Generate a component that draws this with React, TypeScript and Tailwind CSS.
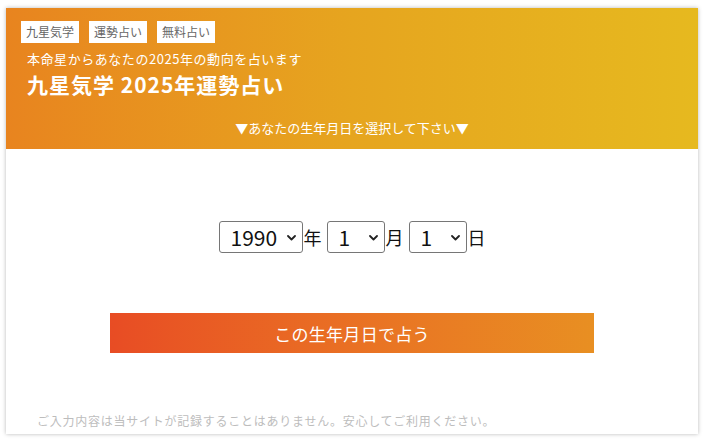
import React from "react";

const font = { fontFamily: '"Noto Sans CJK JP", "Noto Sans", sans-serif' };

function Sel({ value, w }: { value: string; w: string }) {
  return (
    <div className={`relative ${w} h-[32px] border border-[#767676] rounded-[3px] bg-white flex items-center`}>
      <span className="pl-[11px] text-[21px] leading-none text-[#111]">{value}</span>
      <svg className="absolute right-[6px] top-[13px]" width="9" height="6" viewBox="0 0 9 6">
        <path d="M1 1 L4.5 4.5 L8 1" stroke="#222" strokeWidth="1.8" fill="none" strokeLinecap="round" strokeLinejoin="round" />
      </svg>
    </div>
  );
}

export default function App() {
  return (
    <div className="w-[710px] h-[443px] bg-white pt-[8px] pl-[6px]" style={font}>
      <div className="w-[692px] h-[426px] bg-white shadow-[0_0_4px_rgba(0,0,0,0.28)] flex flex-col">
        <div className="h-[141px] bg-gradient-to-r from-[#e8841f] via-[#e6a51f] to-[#e6b91f] flex flex-col pl-[15px] pt-[13px]">
          <div className="flex gap-[10px]">
            {["九星気学", "運勢占い", "無料占い"].map((t) => (
              <span key={t} className="h-[22px] px-[5px] bg-white text-[#666] text-[12px] leading-[22px]">
                {t}
              </span>
            ))}
          </div>
          <div className="pl-[6px] mt-[7px] text-white text-[13px] leading-[18px] tracking-[0.55px]">本命星からあなたの2025年の動向を占います</div>
          <div className="pl-[6px] mt-[3px] text-white text-[21px] font-bold leading-[27px] tracking-[1px]">九星気学 2025年運勢占い</div>
          <div className="mt-[21px] -ml-[15px] text-center text-white text-[13px] leading-[18px]">▼あなたの生年月日を選択して下さい▼</div>
        </div>
        <div className="flex flex-col items-center">
          <div className="mt-[72px] flex items-center text-[18px] text-[#111] leading-none">
            <Sel value="1990" w="w-[84px]" />
            <span className="ml-[1px]">年</span>
            <span className="w-[5px]" />
            <Sel value="1" w="w-[58px]" />
            <span className="ml-[1px]">月</span>
            <span className="w-[5px]" />
            <Sel value="1" w="w-[58px]" />
            <span className="ml-[1px]">日</span>
          </div>
          <button className="mt-[60px] w-[484px] h-[40px] bg-gradient-to-r from-[#e84c24] to-[#e88f22] text-white text-[17px] leading-none tracking-[0.3px]">
            この生年月日で占う
          </button>
        </div>
        <div className="mt-[59px] pl-[31px] text-[12px] text-[#bdbdbd] leading-[18px] tracking-[0.75px]">
          ご入力内容は当サイトが記録することはありません。安心してご利用ください。
        </div>
      </div>
    </div>
  );
}
